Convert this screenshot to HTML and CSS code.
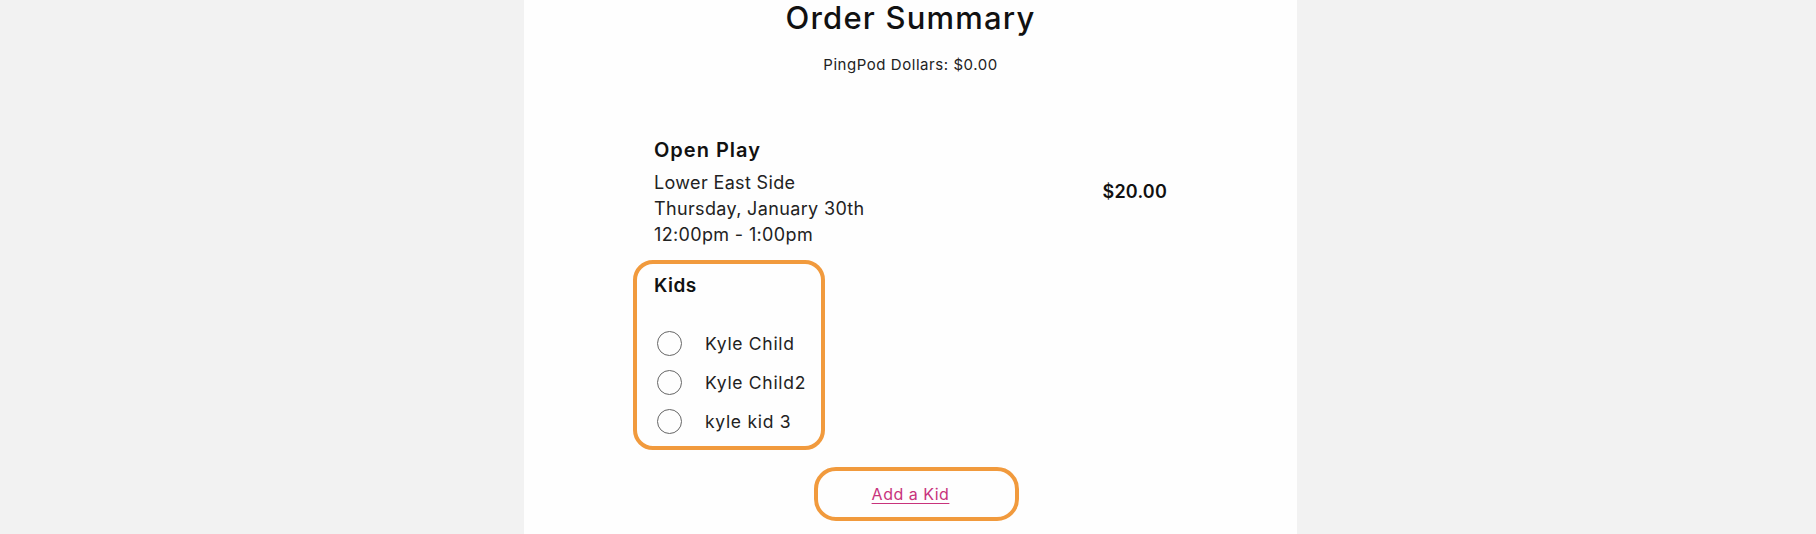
FILE: index.html
```html
<!DOCTYPE html>
<html lang="en">
<head>
<meta charset="utf-8">
<title>Order Summary</title>
<link rel="stylesheet" href="styles.css">
</head>
<body>
<div class="page">
  <main class="panel">
    <h1 class="title">Order Summary</h1>
    <p class="balance">PingPod Dollars: $0.00</p>
    <section class="order">
      <div class="item">
        <div class="item-info">
          <h2 class="item-name">Open Play</h2>
          <p class="item-line">Lower East Side</p>
          <p class="item-line">Thursday, January 30th</p>
          <p class="item-line">12:00pm - 1:00pm</p>
        </div>
        <div class="item-price">$20.00</div>
      </div>
      <div class="kids">
        <h3 class="kids-title">Kids</h3>
        <ul class="kid-list">
          <li class="kid"><span class="radio"></span><span class="kid-name">Kyle Child</span></li>
          <li class="kid"><span class="radio"></span><span class="kid-name">Kyle Child2</span></li>
          <li class="kid"><span class="radio"></span><span class="kid-name">kyle kid 3</span></li>
        </ul>
      </div>
      <div class="add-row"><a class="add-kid" href="#">Add a Kid</a></div>
    </section>
  </main>
</div>
</body>
</html>
```

FILE: styles.css
```css
html, body {
  margin: 0;
  padding: 0;
}
body {
  background: #f2f2f2;
  font-family: "Inter", "Lato", sans-serif;
  color: #1a1a1a;
}
.page {
  height: 534px;
  overflow: hidden;
}
.panel {
  width: 773px;
  margin-left: 524px;
  min-height: 534px;
  background: #fefefe;
  box-sizing: border-box;
  padding: 0 130px;
}
.title {
  margin: 0;
  font-size: 31px;
  line-height: 36px;
  font-weight: 500;
  letter-spacing: 1.2px;
  text-align: center;
  color: #111;
}
.balance {
  margin: 20px 0 0;
  font-size: 15px;
  line-height: 18px;
  letter-spacing: 0.55px;
  text-align: center;
  color: #222;
}
.order {
  margin-top: 64px;
}
.item {
  display: flex;
  justify-content: space-between;
  align-items: flex-start;
}
.item-name {
  margin: 0 0 8px;
  font-size: 20px;
  line-height: 24px;
  font-weight: 600;
  letter-spacing: 1px;
  color: #111;
}
.item-line {
  margin: 0;
  font-size: 18px;
  line-height: 26px;
  letter-spacing: 0.35px;
  color: #222;
}
.item-price {
  margin-top: 42px;
  font-size: 18px;
  line-height: 24px;
  font-weight: 600;
  letter-spacing: 0.2px;
  color: #111;
}
.kids {
  width: 192px;
  box-sizing: border-box;
  margin: 12px 0 0 -21px;
  padding: 10px 0 12px 17px;
  border: 4px solid #f19a3d;
  border-radius: 20px;
}
.kids-title {
  margin: 0;
  font-size: 19px;
  line-height: 24px;
  font-weight: 600;
  letter-spacing: 0.5px;
  color: #111;
}
.kid-list {
  list-style: none;
  margin: 33px 0 0;
  padding: 0;
  display: flex;
  flex-direction: column;
  gap: 14px;
}
.kid {
  display: flex;
  align-items: center;
  gap: 23px;
  height: 25px;
}
.radio {
  width: 25px;
  height: 25px;
  box-sizing: border-box;
  margin-left: 3px;
  border: 1.5px solid #666;
  border-radius: 50%;
}
.kid-name {
  font-size: 17.5px;
  line-height: 24px;
  letter-spacing: 0.7px;
  color: #222;
}
.add-row {
  display: flex;
  justify-content: center;
  margin-top: 17px;
}
.add-kid {
  margin-left: 12px;
  display: block;
  height: 54px;
  box-sizing: border-box;
  padding: 0 66px 0 54px;
  border: 4px solid #f19a3d;
  border-radius: 22px;
  font-size: 16px;
  line-height: 46px;
  letter-spacing: 0.5px;
  color: #c8337c;
  text-decoration: underline;
  text-underline-offset: 3px;
}
```
